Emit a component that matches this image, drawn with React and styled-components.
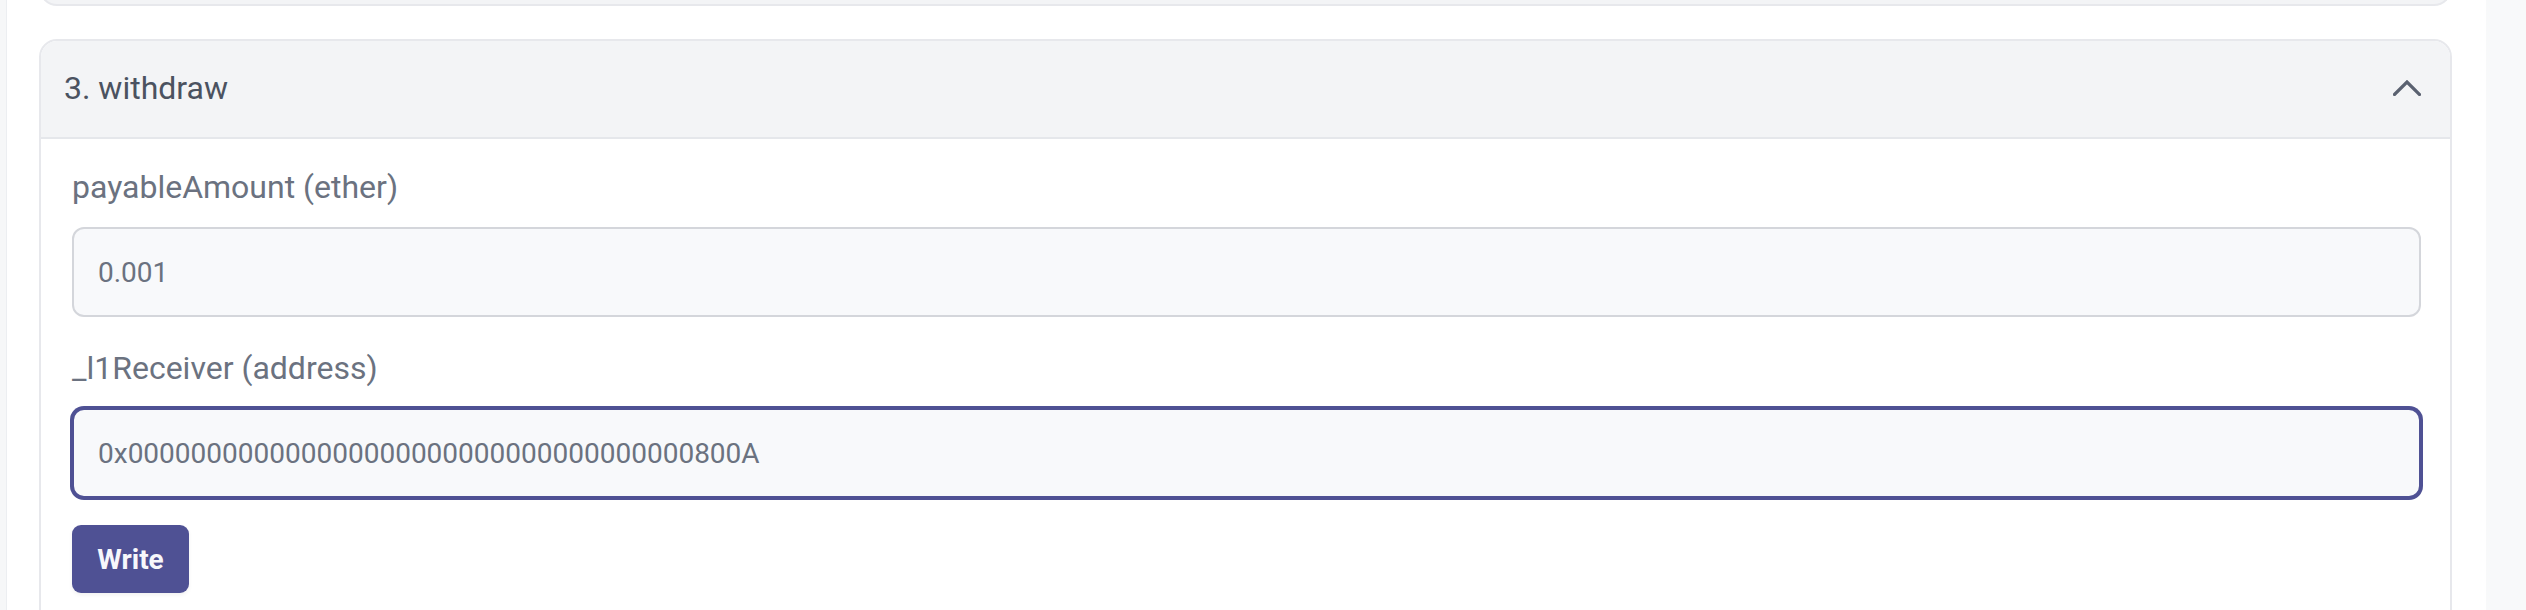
import React from "react";
import styled, { createGlobalStyle } from "styled-components";

const GlobalStyle = createGlobalStyle`
  html, body {
    margin: 0;
    padding: 0;
    background: #f8f9fa;
    font-family: Roboto, "Noto Sans", "Liberation Sans", sans-serif;
  }
  * { box-sizing: border-box; }
`;

const Page = styled.div`
  display: flex;
  width: 2526px;
  height: 610px;
  overflow: hidden;
  background: #f8f9fa;
`;

const LeftGutter = styled.div`
  width: 7px;
  flex: none;
  background: #f6f7f8;
  border-right: 1px solid #eceef1;
`;

const Main = styled.main`
  width: 2479px;
  flex: none;
  background: #ffffff;
  padding: 0 34px 0 32px;
  display: flex;
  flex-direction: column;
  gap: 33px;
`;

const RightGutter = styled.div`
  flex: 1;
  background: #f8f9fa;
`;

const PrevCardTail = styled.div`
  flex: none;
  margin-top: -14px;
  height: 20px;
  border: 2px solid #e7e8ec;
  border-top: none;
  border-radius: 0 0 18px 18px;
  background: #f3f4f6;
`;

const Card = styled.section`
  border: 2px solid #e7e8ec;
  border-radius: 18px;
  overflow: hidden;
  background: #ffffff;
  flex: none;
`;

const CardHeader = styled.header`
  height: 98px;
  display: flex;
  align-items: center;
  justify-content: space-between;
  padding: 0 29px 2px 23px;
  background: #f3f4f6;
  border-bottom: 2px solid #e5e7eb;
`;

const Title = styled.h3`
  margin: 0;
  font-size: 32px;
  font-weight: 400;
  line-height: 48px;
  color: #4b5260;
`;

const ChevronIcon = styled.svg`
  width: 28px;
  height: 16px;
  display: block;
`;

const CardBody = styled.div`
  padding: 24px 29px 80px 31px;
  display: flex;
  flex-direction: column;
  gap: 27px;
`;

const Field = styled.div`
  display: flex;
  flex-direction: column;
  gap: 16px;
`;

const Label = styled.label`
  font-size: 32px;
  line-height: 48px;
  color: #6b7280;
`;

const Input = styled.div`
  height: 90px;
  display: flex;
  align-items: center;
  padding: 0 24px;
  background: #f8f9fb;
  border-radius: 12px;
  border: 2px solid ${(p) => (p.$focused ? "#4f5194" : "#d4d6db")};
  box-shadow: ${(p) => (p.$focused ? "0 0 0 2px #4f5194" : "none")};
  font-size: 28px;
  color: #6b7280;
  white-space: nowrap;
`;

const Button = styled.button`
  align-self: flex-start;
  width: 117px;
  height: 68px;
  border: none;
  border-radius: 9px;
  background: #4f5194;
  color: #f7f7fb;
  font-family: Roboto, "Noto Sans", sans-serif;
  font-weight: 700;
  font-size: 28px;
  box-shadow: 0 2px 4px rgba(0, 0, 0, 0.06);
  cursor: pointer;
`;

export default function App() {
  return (
    <>
      <GlobalStyle />
      <Page>
        <LeftGutter />
        <Main>
          <PrevCardTail />
          <Card>
            <CardHeader>
              <Title>3. withdraw</Title>
              <ChevronIcon viewBox="0 0 28 16" fill="none">
                <polyline
                  points="1.5,14.5 14,2 26.5,14.5"
                  stroke="#5a6170"
                  strokeWidth="3.2"
                  strokeLinecap="square"
                />
              </ChevronIcon>
            </CardHeader>
            <CardBody>
              <Field>
                <Label>payableAmount (ether)</Label>
                <Input>0.001</Input>
              </Field>
              <Field>
                <Label>_l1Receiver (address)</Label>
                <Input $focused>0x000000000000000000000000000000000000800A</Input>
              </Field>
              <Button>Write</Button>
            </CardBody>
          </Card>
        </Main>
        <RightGutter />
      </Page>
    </>
  );
}
